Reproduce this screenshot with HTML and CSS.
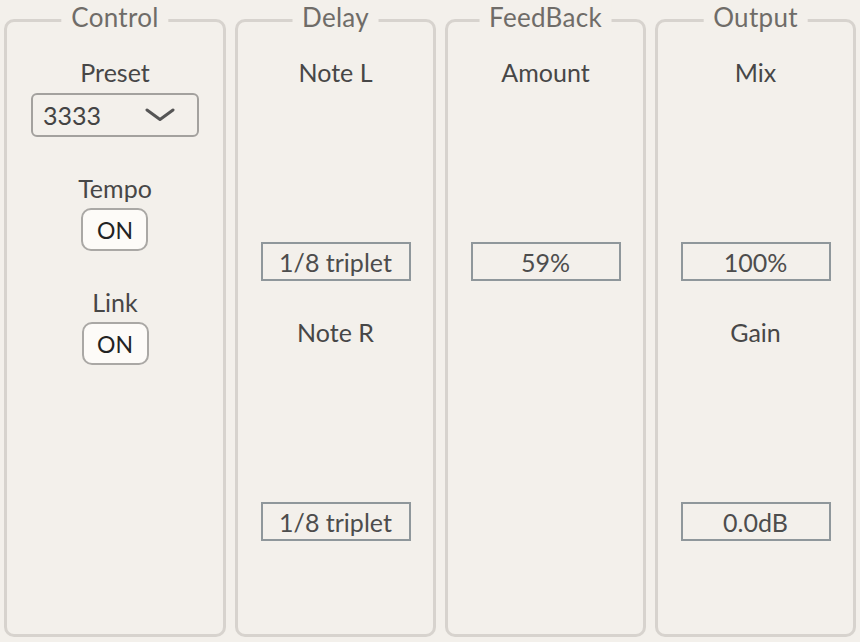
FILE: index.html
```html
<!DOCTYPE html>
<html lang="en">
<head>
<meta charset="utf-8">
<title>Delay</title>
<link rel="stylesheet" href="styles.css">
</head>
<body>
<div class="rack">
  <section class="panel panel-control">
    <h2 class="legend">Control</h2>
    <div class="group">
      <div class="label">Preset</div>
      <div class="select">
        <span class="select-value">3333</span>
        <svg class="chevron" width="30" height="16" viewBox="0 0 30 16"><path d="M2 3 L15 12.5 L28 3" fill="none" stroke="#555" stroke-width="3" stroke-linecap="round" stroke-linejoin="round"/></svg>
      </div>
    </div>
    <div class="group">
      <div class="label">Tempo</div>
      <div class="toggle">ON</div>
    </div>
    <div class="group">
      <div class="label">Link</div>
      <div class="toggle">ON</div>
    </div>
  </section>

  <section class="panel">
    <h2 class="legend">Delay</h2>
    <div class="param">
      <div class="label">Note L</div>
      <div class="knob"></div>
      <div class="value">1/8 triplet</div>
    </div>
    <div class="param">
      <div class="label">Note R</div>
      <div class="knob"></div>
      <div class="value">1/8 triplet</div>
    </div>
  </section>

  <section class="panel">
    <h2 class="legend">FeedBack</h2>
    <div class="param">
      <div class="label">Amount</div>
      <div class="knob"></div>
      <div class="value">59%</div>
    </div>
  </section>

  <section class="panel">
    <h2 class="legend">Output</h2>
    <div class="param">
      <div class="label">Mix</div>
      <div class="knob"></div>
      <div class="value">100%</div>
    </div>
    <div class="param">
      <div class="label">Gain</div>
      <div class="knob"></div>
      <div class="value">0.0dB</div>
    </div>
  </section>
</div>
</body>
</html>
```

FILE: styles.css
```css
html, body {
  margin: 0;
  padding: 0;
  background: #f3f0eb;
}

body {
  font-family: Lato, "Open Sans", "DejaVu Sans", sans-serif;
  width: 860px;
  height: 642px;
  overflow: hidden;
}

.rack {
  display: flex;
  gap: 9px;
  padding: 19px 4px 0 4px;
  box-sizing: border-box;
  height: 642px;
}

.panel {
  position: relative;
  box-sizing: border-box;
  width: 201px;
  height: 618px;
  flex: none;
  border: 3px solid #d7d3ce;
  border-radius: 10px;
  display: flex;
  flex-direction: column;
  align-items: center;
  padding-top: 35px;
  gap: 36px;
}

.panel-control {
  width: 222px;
}

.legend {
  position: absolute;
  top: -20px;
  left: 50%;
  transform: translateX(-50%);
  margin: 0;
  padding: 0 10px;
  background: #f3f0eb;
  font-size: 26px;
  font-weight: 400;
  line-height: 31px;
  letter-spacing: 0.3px;
  color: #6f6c68;
  white-space: nowrap;
}

.label {
  font-size: 25px;
  line-height: 30px;
  color: #474747;
  text-align: center;
}

.group {
  display: flex;
  flex-direction: column;
  align-items: center;
  gap: 5px;
}

.select {
  box-sizing: border-box;
  width: 168px;
  height: 44px;
  margin-top: 1px;
  border: 2px solid #a3a19e;
  border-radius: 6px;
  display: flex;
  align-items: center;
  justify-content: space-between;
  padding: 0 22px 0 10px;
}

.select-value {
  font-size: 25px;
  line-height: 30px;
  color: #444;
}

.chevron {
  display: block;
}

.toggle {
  box-sizing: border-box;
  width: 67px;
  height: 43px;
  border: 2px solid #aaa8a5;
  border-radius: 10px;
  background: #fdfbf8;
  display: flex;
  align-items: center;
  justify-content: center;
  font-size: 23px;
  color: #222;
}

.param {
  display: flex;
  flex-direction: column;
  align-items: center;
}

.knob {
  height: 155px;
}

.value {
  box-sizing: border-box;
  width: 150px;
  height: 39px;
  border: 2px solid #8f979b;
  display: flex;
  align-items: center;
  justify-content: center;
  font-size: 25px;
  line-height: 30px;
  color: #4d4d4d;
}
```
